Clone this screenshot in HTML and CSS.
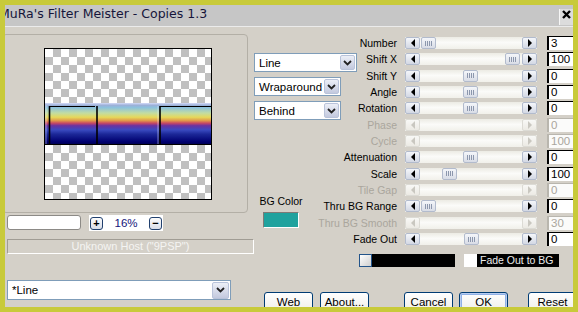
FILE: index.html
```html
<!DOCTYPE html>
<html lang="en">
<head>
  <meta charset="UTF-8" />
  <title>MuRa's Filter Meister - Copies 1.3</title>
  <link rel="stylesheet" href="styles.css">
</head>
<body>

  <div class="window">
    <!-- TITLE BAR -->
    <div class="titlebar">
      <span class="title">MuRa's Filter Meister - Copies 1.3</span>
      <span class="close">
        <svg width="12" height="9" viewBox="0 0 12 9"><path d="M2 1L9 8M9 1L2 8" stroke="#000" stroke-width="2.4"/></svg>
      </span>
    </div>

    <div class="dialog">
      <!-- LEFT: preview -->
      <div class="left">
        <div class="group">
          <div class="preview">
            <svg class="strip" width="166" height="42" viewBox="0 0 166 42">
              <defs>
                <linearGradient id="band" x1="0" y1="0" x2="0" y2="1">
                  <stop offset="0" stop-color="#d4daf8"/>
                  <stop offset="0.055" stop-color="#9cb0d8"/>
                  <stop offset="0.11" stop-color="#8cc2dc"/>
                  <stop offset="0.24" stop-color="#c2dca2"/>
                  <stop offset="0.34" stop-color="#e6d85a"/>
                  <stop offset="0.42" stop-color="#e0984a"/>
                  <stop offset="0.48" stop-color="#c84862"/>
                  <stop offset="0.54" stop-color="#6a32a0"/>
                  <stop offset="0.64" stop-color="#3a4ac0"/>
                  <stop offset="0.74" stop-color="#1c2898"/>
                  <stop offset="0.92" stop-color="#000070"/>
                  <stop offset="1" stop-color="#00004a"/>
                </linearGradient>
              </defs>
              <rect width="166" height="42" fill="url(#band)"/>
              <path d="M1 2V42M113 3V42" stroke="#e8f0ff" stroke-opacity="0.5"/>
              <path d="M4 3.5H50M115 3.5H166" stroke="#000" stroke-width="1.2"/>
              <path d="M4.5 3V42M52 3V42M115 3V42" stroke="#000" stroke-width="1.6"/>
              <path d="M0 41.5H166" stroke="#000"/>
            </svg>
          </div>
        </div>

        <div class="zoom-row">
          <div class="field"></div>
          <div class="zoom">
            <span class="zbtn">+</span>
            <span class="zval">16%</span>
            <span class="zbtn">&minus;</span>
          </div>
        </div>

        <div class="host">Unknown Host ("9PSP")</div>

        <div class="combo combo-preset">
          <span>*Line</span>
          <span class="drop"><svg width="9" height="6" viewBox="0 0 9 6"><path d="M1 1L4.5 4.5L8 1" fill="none" stroke="#222" stroke-width="1.8"/></svg></span>
        </div>
      </div>

      <!-- RIGHT: options and sliders -->
      <div class="side">
        <div class="upper">
          <div class="mid">
            <div class="combo combo-mode">
              <span>Line</span>
              <span class="drop"><svg width="9" height="6" viewBox="0 0 9 6"><path d="M1 1L4.5 4.5L8 1" fill="none" stroke="#222" stroke-width="1.8"/></svg></span>
            </div>
            <div class="combo combo-small">
              <span>Wraparound</span>
              <span class="drop"><svg width="9" height="6" viewBox="0 0 9 6"><path d="M1 1L4.5 4.5L8 1" fill="none" stroke="#222" stroke-width="1.8"/></svg></span>
            </div>
            <div class="combo combo-small">
              <span>Behind</span>
              <span class="drop"><svg width="9" height="6" viewBox="0 0 9 6"><path d="M1 1L4.5 4.5L8 1" fill="none" stroke="#222" stroke-width="1.8"/></svg></span>
            </div>

            <div class="bgcolor">
              <div class="bg-label">BG Color</div>
              <div class="swatch"></div>
            </div>
          </div>

          <div class="sliders">
            <div class="row">
              <span class="name">Number</span>
              <div class="scroll"><i class="arr l"></i><div class="track"><i class="thumb" style="margin-left:1px"></i></div><i class="arr r"></i></div>
              <div class="val">3</div>
            </div>
            <div class="row">
              <span class="name">Shift X</span>
              <div class="scroll"><i class="arr l"></i><div class="track"><i class="thumb" style="margin-left:85px"></i></div><i class="arr r"></i></div>
              <div class="val">100</div>
            </div>
            <div class="row">
              <span class="name">Shift Y</span>
              <div class="scroll"><i class="arr l"></i><div class="track"><i class="thumb" style="margin-left:43px"></i></div><i class="arr r"></i></div>
              <div class="val">0</div>
            </div>
            <div class="row">
              <span class="name">Angle</span>
              <div class="scroll"><i class="arr l"></i><div class="track"><i class="thumb" style="margin-left:43px"></i></div><i class="arr r"></i></div>
              <div class="val">0</div>
            </div>
            <div class="row">
              <span class="name">Rotation</span>
              <div class="scroll"><i class="arr l"></i><div class="track"><i class="thumb" style="margin-left:43px"></i></div><i class="arr r"></i></div>
              <div class="val">0</div>
            </div>
            <div class="row off">
              <span class="name">Phase</span>
              <div class="scroll"><i class="arr l"></i><div class="track"></div><i class="arr r"></i></div>
              <div class="val">0</div>
            </div>
            <div class="row off">
              <span class="name">Cycle</span>
              <div class="scroll"><i class="arr l"></i><div class="track"></div><i class="arr r"></i></div>
              <div class="val">100</div>
            </div>
            <div class="row">
              <span class="name">Attenuation</span>
              <div class="scroll"><i class="arr l"></i><div class="track"><i class="thumb" style="margin-left:43px"></i></div><i class="arr r"></i></div>
              <div class="val">0</div>
            </div>
            <div class="row">
              <span class="name">Scale</span>
              <div class="scroll"><i class="arr l"></i><div class="track"><i class="thumb" style="margin-left:22px"></i></div><i class="arr r"></i></div>
              <div class="val">100</div>
            </div>
            <div class="row off">
              <span class="name">Tile Gap</span>
              <div class="scroll"><i class="arr l"></i><div class="track"></div><i class="arr r"></i></div>
              <div class="val">0</div>
            </div>
            <div class="row">
              <span class="name">Thru BG Range</span>
              <div class="scroll"><i class="arr l"></i><div class="track"><i class="thumb" style="margin-left:1px"></i></div><i class="arr r"></i></div>
              <div class="val">0</div>
            </div>
            <div class="row off">
              <span class="name">Thru BG Smooth</span>
              <div class="scroll"><i class="arr l"></i><div class="track"></div><i class="arr r"></i></div>
              <div class="val">30</div>
            </div>
            <div class="row">
              <span class="name">Fade Out</span>
              <div class="scroll"><i class="arr l"></i><div class="track"><i class="thumb" style="margin-left:44px"></i></div><i class="arr r"></i></div>
              <div class="val">0</div>
            </div>

            <div class="fade-bar">
              <span class="fb-swatch"></span>
              <span class="fb-black"></span>
              <span class="fb-check"></span>
              <span class="fb-label">Fade Out to BG</span>
            </div>
          </div>
        </div>

        <!-- BUTTONS -->
        <div class="buttons">
          <button class="btn btn-web">Web</button>
          <button class="btn btn-about">About...</button>
          <button class="btn btn-cancel">Cancel</button>
          <button class="btn btn-ok">OK</button>
          <button class="btn btn-reset">Reset</button>
        </div>
      </div>
    </div>
  </div>

</body>
</html>
```

FILE: styles.css
```css
body {
  margin: 0;
  background: #c8ca3a;
  font-family: "Liberation Sans", Arial, sans-serif;
  font-size: 11px;
  color: #000;
}

.window {
  margin: 5px 0 0 5px;
  width: 568px;
  height: 302px;
  overflow: hidden;
  background: #d4d0c8;
}

/* TITLE BAR */
.titlebar {
  height: 21px;
  background: #c6c6c6;
  border-bottom: 1px solid #ebebeb;
  display: flex;
  justify-content: space-between;
}

.title {
  font-family: "DejaVu Sans", sans-serif;
  font-size: 12.5px;
  line-height: 18px;
  color: #15153a;
  margin-left: -6px;
  white-space: nowrap;
}

.close {
  width: 14px;
  height: 16px;
  margin-top: 4px;
  background: #dcdcdc;
  border-left: 1px solid #f6f6f6;
  display: flex;
  justify-content: flex-end;
  align-items: flex-start;
  padding-top: 1px;
  box-sizing: border-box;
}

.dialog {
  display: flex;
  height: 280px;
}

/* LEFT COLUMN */
.left {
  width: 248px;
  flex: none;
}

.group {
  margin: 7px 0 0 -3px;
  width: 246px;
  height: 179px;
  box-sizing: border-box;
  border: 1px solid #b3afa6;
  border-radius: 4px;
  padding: 13px 0 0 41px;
}

.preview {
  width: 168px;
  height: 152px;
  box-sizing: border-box;
  border: 1px solid #000;
  background: repeating-conic-gradient(#c0c0c0 0 25%, #fff 0 50%) 0 0 / 16px 16px;
}

.strip {
  display: block;
  margin-top: 54px;
}

.zoom-row {
  display: flex;
  gap: 8px;
  margin: 2px 0 0 2px;
}

.field {
  width: 74px;
  height: 15px;
  box-sizing: border-box;
  background: #fff;
  border: 1px solid #8c8a86;
  border-radius: 3px;
}

.zoom {
  width: 74px;
  height: 16px;
  background: #fff;
  display: flex;
  align-items: center;
  justify-content: space-between;
  padding: 0 1px;
  box-sizing: border-box;
}

.zbtn {
  width: 13px;
  height: 13px;
  box-sizing: border-box;
  border: 1px solid #21406e;
  border-radius: 3px;
  background: linear-gradient(#fdfdfd, #d9dde8);
  font-weight: bold;
  font-size: 11px;
  line-height: 10px;
  text-align: center;
}

.zval {
  color: #14147a;
  font-size: 11.5px;
}

.host {
  margin: 8px 0 0 2px;
  width: 247px;
  height: 15px;
  box-sizing: border-box;
  border-top: 1px solid #a09c94;
  border-left: 1px solid #a09c94;
  border-right: 1px solid #fff;
  border-bottom: 1px solid #fff;
  color: #f4f4f2;
  text-align: center;
  line-height: 13px;
}

/* COMBO BOXES */
.combo {
  display: flex;
  align-items: center;
  justify-content: space-between;
  box-sizing: border-box;
  height: 19px;
  border: 1px solid #7f9db9;
  background: #fff;
  padding: 0 1px 0 4px;
  font-size: 11.5px;
}

.drop {
  width: 15px;
  height: 15px;
  box-sizing: border-box;
  border: 1px solid #b9c3da;
  border-radius: 2px;
  background: linear-gradient(#eceff7, #c3c9de);
  display: flex;
  align-items: center;
  justify-content: center;
}

.combo-preset {
  margin: 26px 0 0 2px;
  width: 224px;
  height: 20px;
}

.combo-preset .drop {
  width: 17px;
  height: 17px;
}

.side {
  flex: 1;
}

.upper {
  display: flex;
}

/* MIDDLE COLUMN */
.mid {
  width: 105px;
  flex: none;
}

.combo-mode {
  margin: 26px 0 0 1px;
  width: 103px;
}

.combo-small {
  margin: 5px 0 0 1px;
  width: 87px;
}

.bgcolor {
  margin: 75px 0 0 5px;
  width: 46px;
  text-align: center;
}

.bg-label {
  font-size: 10.5px;
  line-height: 13px;
}

.swatch {
  margin: 4px auto 0;
  width: 36px;
  height: 16px;
  box-sizing: border-box;
  background: #1fa29e;
  border: 1px solid;
  border-color: #7c7a76 #fff #fff #7c7a76;
}

/* SLIDERS */
.sliders {
  width: 215px;
  flex: none;
  padding-top: 8px;
}

.row {
  display: flex;
  align-items: center;
  height: 16.33px;
}

.name {
  width: 39px;
  flex: none;
  display: flex;
  justify-content: flex-end;
  white-space: nowrap;
  font-size: 10.5px;
  font-weight: normal;
}

.scroll {
  display: flex;
  flex: none;
  width: 132px;
  height: 12px;
  margin-left: 8px;
  background: linear-gradient(#ecebe4, #fbfbf9 45%, #f1f0ea);
}

.arr {
  width: 15px;
  height: 12px;
  flex: none;
  box-sizing: border-box;
  border: 1px solid #b2bbcd;
  border-radius: 2px;
  background: linear-gradient(#f4f6fa, #d3d8e4);
  display: flex;
  align-items: center;
  justify-content: center;
}

.arr::before {
  content: "";
  border: 4px solid transparent;
}

.arr.l::before {
  border-left-width: 0;
  border-right-color: #000;
}

.arr.r::before {
  border-right-width: 0;
  border-left-color: #000;
}

.track {
  flex: 1;
}

.thumb {
  display: flex;
  align-items: center;
  justify-content: center;
  width: 15px;
  height: 12px;
  box-sizing: border-box;
  border: 1px solid #b2bbcd;
  border-radius: 2px;
  background: linear-gradient(#f4f6fa, #d8dce6);
}

.thumb::before {
  content: "";
  width: 7px;
  height: 5px;
  background: repeating-linear-gradient(90deg, #8c97ad 0 1px, transparent 1px 2px);
}

.val {
  margin-left: 10px;
  width: 30px;
  height: 14px;
  flex: none;
  box-sizing: border-box;
  background: #fff;
  border-top: 1px solid #000;
  border-left: 2px solid #000;
  padding-left: 2px;
  line-height: 12px;
  font-size: 11.5px;
}

.row.off .name,
.row.off .val {
  color: #aaa69d;
}

.row.off .val {
  border-color: #b9b6ae;
  background: #fbfbfa;
}

.row.off .arr {
  border-color: #dcdbd5;
  background: linear-gradient(#f8f8f6, #eceae4);
}

.row.off .arr.l::before {
  border-right-color: #c9c7c0;
}

.row.off .arr.r::before {
  border-left-color: #c9c7c0;
}

/* FADE OUT COLOUR BAR */
.fade-bar {
  display: flex;
  height: 13px;
  margin: 7px 0 0 1px;
}

.fb-swatch {
  width: 13px;
  height: 13px;
  box-sizing: border-box;
  border: 1px solid #23548a;
  background: linear-gradient(135deg, #fff, #cfcfcf);
}

.fb-black {
  width: 83px;
  background: #000;
}

.fb-check {
  margin-left: 9px;
  width: 13px;
  background: #fff;
}

.fb-label {
  width: 79px;
  background: #000;
  color: #ececec;
  padding-left: 3px;
  font-size: 10.5px;
  line-height: 13px;
}

/* BUTTONS */
.buttons {
  display: flex;
  margin-top: 25px;
}

.btn {
  width: 49px;
  height: 23px;
  flex: none;
  padding: 0 0 3px;
  border: 1px solid #003c74;
  border-radius: 3px;
  background: linear-gradient(#fff, #f0efea 80%, #d9d4ca);
  font-family: "Liberation Sans", Arial, sans-serif;
  font-size: 11.5px;
  color: #000;
}

.btn-web { margin-left: 11px; }
.btn-about { margin-left: 7px; }
.btn-cancel { margin-left: 35px; }
.btn-ok {
  margin-left: 6px;
  box-shadow: inset 0 0 0 1px #b8cdf0, inset 0 0 0 2px #8fb0e6;
}
.btn-reset { margin-left: 20px; }
```
